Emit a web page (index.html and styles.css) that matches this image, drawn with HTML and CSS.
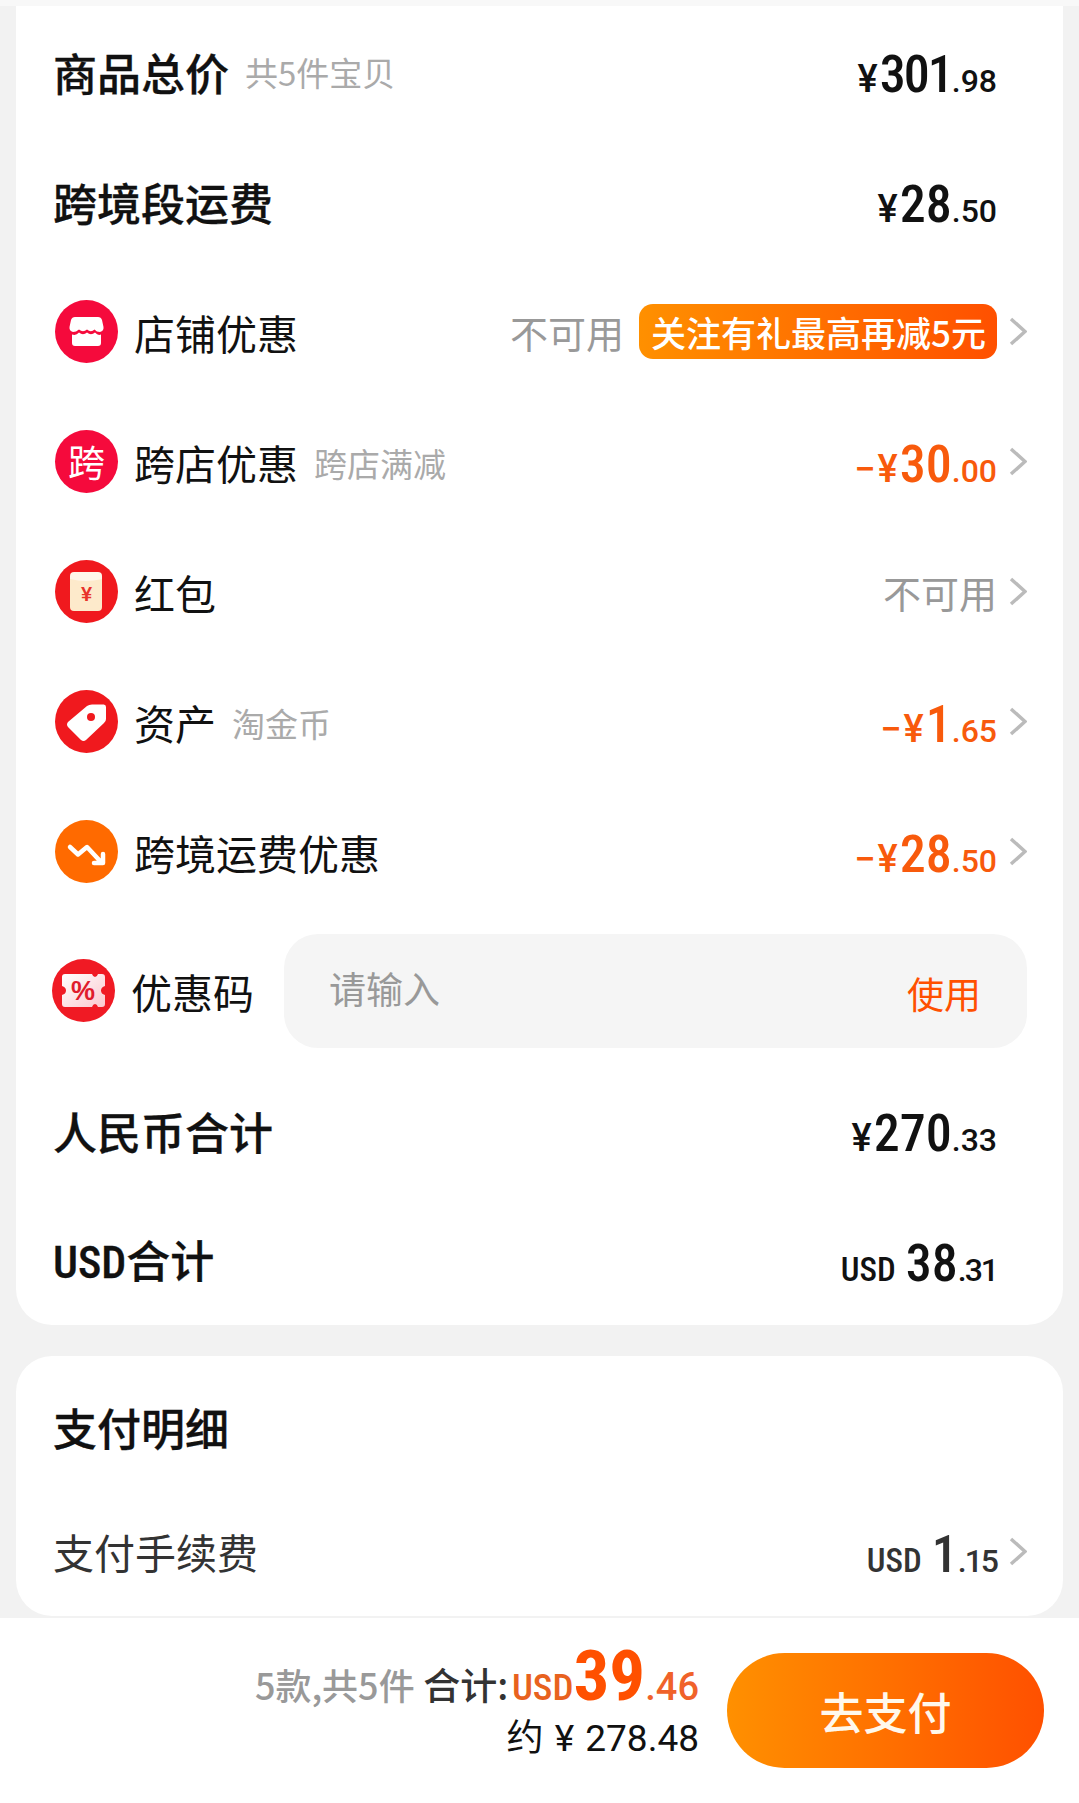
FILE: index.html
```html
<!DOCTYPE html>
<html lang="zh-CN">
<head>
    <meta charset="UTF-8">
    <title>订单结算</title>
    <link rel="stylesheet" href="styles.css">
</head>
<body>
    <div class="top-strip"></div>

    <div class="card card-price">
        <div class="row row-plain">
            <span class="title">商品总价</span>
            <span class="sub sub-title">共5件宝贝</span>
            <span class="amount"><span class="cur">¥</span><span class="int int-narrow">301</span><span class="dec">.98</span></span>
        </div>
        <div class="row row-plain">
            <span class="title">跨境段运费</span>
            <span class="amount"><span class="cur">¥</span><span class="int">28</span><span class="dec">.50</span></span>
        </div>

        <div class="row">
            <svg class="icon" viewBox="0 0 63 63">
                <circle cx="31.5" cy="31.5" r="31.5" fill="#f50a3c"/>
                <path fill="#fff" d="M20 17H43Q46 17 47 20L48.5 27Q49 31 45 32Q41.5 32 39.5 29.5Q36 33 32 29.5Q28 33 24 29.5Q21 32 18 32Q14 31 14.5 27L16 20Q17 17 20 17Z"/>
                <path fill="#fff" d="M17 34.5Q21 36 24 32.5Q28 36 32 32.5Q36 36 40 32.5Q43 36 46 34.5V43Q46 46 43 46H20Q17 46 17 43Z"/>
            </svg>
            <span class="label">店铺优惠</span>
            <span class="muted">不可用</span>
            <span class="badge">关注有礼最高再减5元</span>
            <svg class="arrow" viewBox="0 0 18 29"><path d="M2 2L16 14.5L2 27"/></svg>
        </div>
        <div class="row">
            <span class="icon icon-text">跨</span>
            <span class="label">跨店优惠</span>
            <span class="sub">跨店满减</span>
            <span class="amount orange"><span class="cur">−¥</span><span class="int">30</span><span class="dec">.00</span></span>
            <svg class="arrow" viewBox="0 0 18 29"><path d="M2 2L16 14.5L2 27"/></svg>
        </div>
        <div class="row">
            <svg class="icon" viewBox="0 0 63 63">
                <circle cx="31.5" cy="31.5" r="31.5" fill="#f0191e"/>
                <path fill="#fdeacb" d="M15 17H47V47Q47 51 43 51H19Q15 51 15 47Z"/>
                <path fill="#fff6ea" d="M19 12H43Q47 12 47 16V19Q31 23 15 19V16Q15 12 19 12Z"/>
                <text class="icon-yen" x="31.5" y="41" text-anchor="middle">¥</text>
            </svg>
            <span class="label">红包</span>
            <span class="muted">不可用</span>
            <svg class="arrow" viewBox="0 0 18 29"><path d="M2 2L16 14.5L2 27"/></svg>
        </div>
        <div class="row">
            <svg class="icon" viewBox="0 0 63 63">
                <circle cx="31.5" cy="31.5" r="31.5" fill="#f0191e"/>
                <path fill="#fff" d="M32 16Q34 14.5 37 14.5H48Q51 14 51 17V29Q51 31.5 49 33L31 50Q28.5 52 26 50L13 37Q11 34.5 13 32Z"/>
                <circle cx="36" cy="27" r="4" fill="#f0191e"/>
            </svg>
            <span class="label">资产</span>
            <span class="sub">淘金币</span>
            <span class="amount orange"><span class="cur">−¥</span><span class="int">1</span><span class="dec">.65</span></span>
            <svg class="arrow" viewBox="0 0 18 29"><path d="M2 2L16 14.5L2 27"/></svg>
        </div>
        <div class="row">
            <svg class="icon" viewBox="0 0 63 63">
                <circle cx="31.5" cy="31.5" r="31.5" fill="#ff6a00"/>
                <path class="icon-line" d="M15 27L23 34.5L32 27L46 42M48 34V43H39"/>
            </svg>
            <span class="label">跨境运费优惠</span>
            <span class="amount orange"><span class="cur">−¥</span><span class="int">28</span><span class="dec">.50</span></span>
            <svg class="arrow" viewBox="0 0 18 29"><path d="M2 2L16 14.5L2 27"/></svg>
        </div>

        <div class="row-coupon">
            <svg class="icon" viewBox="0 0 63 63">
                <defs>
                    <linearGradient id="ticket" x1="0" y1="0" x2="1" y2="1">
                        <stop offset="0" stop-color="#ffffff"/>
                        <stop offset="1" stop-color="#fbc9cf"/>
                    </linearGradient>
                </defs>
                <circle cx="31.5" cy="31.5" r="31.5" fill="#f01a24"/>
                <path fill="url(#ticket)" d="M13 15H40Q41 18 43 18Q45 18 46 15H50Q53 15 53 18V27Q49 28 49 31.5Q49 35 53 36V45Q53 48 50 48H46Q45 45 43 45Q41 45 40 48H13Q10 48 10 45V36Q14 35 14 31.5Q14 28 10 27V18Q10 15 13 15Z"/>
                <text class="icon-percent" x="31" y="41" text-anchor="middle">%</text>
            </svg>
            <span class="label">优惠码</span>
            <div class="coupon-box">
                <span class="placeholder">请输入</span>
                <span class="use">使用</span>
            </div>
        </div>

        <div class="row row-plain">
            <span class="title">人民币合计</span>
            <span class="amount"><span class="cur">¥</span><span class="int">270</span><span class="dec">.33</span></span>
        </div>
        <div class="row row-plain">
            <span class="title"><span class="latin-title">USD</span>合计</span>
            <span class="amount"><span class="cur cur-usd">USD</span><span class="int">38</span><span class="dec dec-narrow">.31</span></span>
        </div>
    </div>

    <div class="card card-detail">
        <div class="detail-head">支付明细</div>
        <div class="row">
            <span class="label label-dark">支付手续费</span>
            <span class="amount amount-dark"><span class="cur cur-usd">USD</span><span class="int">1</span><span class="dec dec-narrow">.15</span></span>
            <svg class="arrow" viewBox="0 0 18 29"><path d="M2 2L16 14.5L2 27"/></svg>
        </div>
    </div>

    <div class="footer">
        <div class="summary">
            <div class="summary-line">
                <span class="count">5款,共5件</span>
                <span class="total-label">合计:</span>
                <span class="total-usd">USD</span><span class="total-int">39</span><span class="total-dec">.46</span>
            </div>
            <div class="summary-cny">约 ¥ 278.48</div>
        </div>
        <button class="pay-button">去支付</button>
    </div>
</body>
</html>
```

FILE: styles.css
```css
body {
    margin: 0;
    background-color: #f2f2f2;
    font-family: "Noto Sans CJK SC", "Noto Sans", sans-serif;
    color: #111;
    overflow: hidden;
}

.top-strip {
    height: 6px;
    background-color: #f8f8f8;
}

.card {
    margin: 0 16px;
    background-color: #fff;
}

.card-price {
    height: 1319px;
    border-radius: 0 0 36px 36px;
}

.card-detail {
    height: 260px;
    margin-top: 31px;
    border-radius: 36px;
}

.row {
    display: flex;
    align-items: center;
    height: 130px;
    padding: 0 36px 0 39px;
}

.row-plain {
    padding-right: 66px;
}

.row-coupon {
    display: flex;
    align-items: center;
    height: 149px;
    padding: 0 36px 0 36px;
}

.title {
    margin-left: -2px;
    font-size: 44px;
    font-weight: 500;
    line-height: 1.2;
    padding-top: 3px;
    -webkit-text-stroke: 0.3px #111;
}

.latin-title {
    font-family: Roboto, sans-serif;
    font-weight: 500;
    font-size: 44px;
    font-stretch: 75%;
}

.label {
    font-size: 41px;
    line-height: 1.2;
    margin-left: 16px;
    padding-top: 3px;
}

.label-dark {
    margin-left: -2px;
    padding-top: 1px;
    color: #333;
}

.sub {
    font-size: 33px;
    color: #aaa;
    margin-left: 16px;
    padding-top: 4px;
}

.sub-title {
    margin-left: 16px;
    padding-top: 1px;
}

.muted {
    margin-left: auto;
    font-size: 38px;
    color: #999;
    padding-top: 1px;
}

.icon {
    flex: none;
    width: 63px;
    height: 63px;
}

.icon-text {
    display: flex;
    align-items: center;
    justify-content: center;
    border-radius: 50%;
    background-color: #f50a3c;
    color: #fff;
    font-size: 37px;
}

.icon-yen {
    font-family: "Liberation Sans", sans-serif;
    font-size: 20px;
    font-weight: 700;
    fill: #e8322a;
}

.icon-percent {
    font-family: "Liberation Sans", sans-serif;
    font-size: 27px;
    font-weight: 700;
    fill: #e01c2c;
}

.icon-line {
    fill: none;
    stroke: #fff;
    stroke-width: 4.5;
    stroke-linecap: round;
    stroke-linejoin: round;
}

.arrow {
    flex: none;
    width: 18px;
    height: 29px;
    margin-left: 12px;
    fill: none;
    stroke: #bbb;
    stroke-width: 3.5;
}

.amount {
    margin-left: auto;
    padding-top: 7px;
    font-family: Roboto, sans-serif;
    font-weight: 500;
    line-height: 1;
    white-space: nowrap;
    color: #111;
}

.amount.orange {
    color: #f85a0c;
}

.amount-dark {
    color: #333;
}

.cur {
    font-size: 38px;
    font-weight: 500;
    font-stretch: 90%;
    letter-spacing: 2px;
}

.cur-usd {
    font-size: 33px;
    font-stretch: 75%;
    letter-spacing: 0;
    margin-right: 10px;
}

.int {
    font-size: 52px;
    font-stretch: 80%;
}

.int-narrow {
    letter-spacing: -2px;
}

.dec {
    font-size: 32px;
}

.dec-narrow {
    letter-spacing: -2px;
}

.badge {
    margin-left: 15px;
    padding: 0 11px 0 12px;
    height: 55px;
    line-height: 55px;
    border-radius: 14px;
    background: linear-gradient(90deg, #ff9000, #ff5000);
    color: #fff;
    font-size: 35px;
    font-weight: 500;
    white-space: nowrap;
}

.coupon-box {
    display: flex;
    align-items: center;
    justify-content: space-between;
    flex: 1;
    height: 114px;
    margin-left: 30px;
    padding: 0 46px 0 45px;
    border-radius: 34px;
    background-color: #f5f5f5;
}

.placeholder {
    padding-bottom: 6px;
    font-size: 37px;
    color: #999;
}

.use {
    font-size: 37px;
    color: #ff5000;
    padding-top: 4px;
}

.detail-head {
    height: 80px;
    padding: 50px 0 0 37px;
    font-size: 44px;
    font-weight: 500;
    line-height: 42px;
    -webkit-text-stroke: 0.3px #111;
}

.footer {
    display: flex;
    justify-content: flex-end;
    height: 150px;
    margin-top: 2px;
    padding: 35px 35px 0 0;
    background-color: #fff;
}

.summary {
    text-align: right;
    margin-top: -10px;
}

.summary-line {
    white-space: nowrap;
    line-height: 66px;
    height: 66px;
}

.count {
    font-size: 36px;
    font-weight: 500;
    color: #999;
}

.total-label {
    font-size: 37px;
    font-weight: 500;
    color: #333;
    margin-left: 5px;
}

.total-usd {
    font-family: Roboto, sans-serif;
    font-size: 37px;
    font-weight: 500;
    font-stretch: 87%;
    color: #e8621e;
}

.total-int {
    font-family: Roboto, sans-serif;
    font-size: 71px;
    font-weight: 700;
    font-stretch: 85%;
    color: #ff5000;
}

.total-dec {
    font-family: Roboto, sans-serif;
    font-size: 38px;
    font-weight: 500;
    color: #f0622a;
}

.summary-cny {
    margin-top: 7px;
    font-family: Roboto, "Noto Sans CJK SC", sans-serif;
    font-size: 37px;
    line-height: 46px;
    word-spacing: 2px;
    color: #111;
}

.pay-button {
    width: 317px;
    height: 115px;
    margin-left: 28px;
    border: none;
    border-radius: 58px;
    background: linear-gradient(90deg, #ff9000, #ff5000);
    color: #fff8ec;
    font-family: inherit;
    font-size: 44px;
    font-weight: 500;
}
```
